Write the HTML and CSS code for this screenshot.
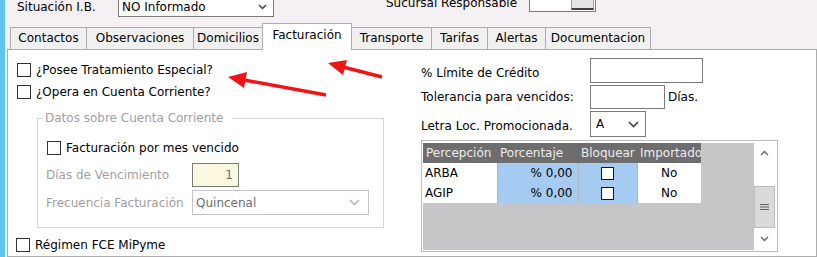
FILE: index.html
```html
<!DOCTYPE html>
<html lang="es">
  <head>
    <meta charset="UTF-8" />
    <title>Cliente - Facturación</title>
    <link rel="stylesheet" href="styles.css">
  </head>
  <body>
    <div class="side-strip"></div>
    <div class="form">
      <!-- fila superior (cortada) -->
      <div class="top-row">
        <div class="top-label ib-label">Situación I.B.</div>
        <div class="combo combo-ib">
          <span>NO Informado</span>
          <svg class="chev" width="9" height="6" viewBox="0 0 9 6"><polyline points="1,1 4.5,4.5 8,1" fill="none" stroke="#404040" stroke-width="1.5"/></svg>
        </div>
        <div class="top-label suc-label">Sucursal Responsable</div>
        <div class="suc-box"><div class="suc-btn"></div></div>
      </div>

      <div class="tabs">
        <div class="tab tab-contactos">Contactos</div>
        <div class="tab tab-obs">Observaciones</div>
        <div class="tab tab-dom">Domicilios</div>
        <div class="tab tab-fact active">Facturación</div>
        <div class="tab tab-transp">Transporte</div>
        <div class="tab tab-tarifas">Tarifas</div>
        <div class="tab tab-alertas">Alertas</div>
        <div class="tab tab-doc">Documentacion</div>
      </div>

      <div class="panel">
        <div class="col-left">
          <label class="check-row"><span class="check"></span>¿Posee Tratamiento Especial?</label>
          <label class="check-row"><span class="check"></span>¿Opera en Cuenta Corriente?</label>

          <fieldset class="group">
            <legend>Datos sobre Cuenta Corriente</legend>
            <label class="check-row"><span class="check"></span>Facturación por mes vencido</label>
            <div class="field-row row-dias">
              <span class="field-label">Días de Vencimiento</span>
              <div class="input input-dias">1</div>
            </div>
            <div class="field-row row-frec">
              <span class="field-label">Frecuencia Facturación</span>
              <div class="combo combo-frec">
                <span>Quincenal</span>
                <svg class="chev" width="11" height="7" viewBox="0 0 11 7"><polyline points="1,1 5.5,5.5 10,1" fill="none" stroke="#b0b0b0" stroke-width="1.4"/></svg>
              </div>
            </div>
          </fieldset>

          <label class="check-row regimen"><span class="check"></span>Régimen FCE MiPyme</label>
        </div>

        <div class="col-right">
          <div class="field-row r1">
            <span class="rlabel">% Límite de Crédito</span>
            <div class="input input-limite"></div>
          </div>
          <div class="field-row r2">
            <span class="rlabel">Tolerancia para vencidos:</span>
            <div class="input input-tol"></div>
            <span class="dias-suffix">Días.</span>
          </div>
          <div class="field-row r3">
            <span class="rlabel">Letra Loc. Promocionada.</span>
            <div class="combo combo-letra">
              <span>A</span>
              <svg class="chev" width="11" height="7" viewBox="0 0 11 7"><polyline points="1,1 5.5,5.5 10,1" fill="none" stroke="#404040" stroke-width="1.6"/></svg>
            </div>
          </div>

          <div class="grid">
            <div class="grid-body">
              <table class="perc">
                <thead>
                  <tr>
                    <th class="c-perc">Percepción</th>
                    <th class="c-pct">Porcentaje</th>
                    <th class="c-blq">Bloquear</th>
                    <th class="c-imp">Importado</th>
                  </tr>
                </thead>
                <tbody>
                  <tr>
                    <td>ARBA</td>
                    <td class="blue num">% 0,00</td>
                    <td class="blue center"><span class="cell-check"></span></td>
                    <td class="center">No</td>
                  </tr>
                  <tr>
                    <td>AGIP</td>
                    <td class="blue num">% 0,00</td>
                    <td class="blue center"><span class="cell-check"></span></td>
                    <td class="center">No</td>
                  </tr>
                </tbody>
              </table>
            </div>
            <div class="vscroll">
              <div class="sb-btn">
                <svg width="9" height="6" viewBox="0 0 9 6"><polyline points="1,5 4.5,1.5 8,5" fill="none" stroke="#606060" stroke-width="1.3"/></svg>
              </div>
              <div class="sb-track"></div>
              <div class="sb-thumb">
                <svg width="9" height="8" viewBox="0 0 9 8"><path d="M0 1.5h9M0 4h9M0 6.5h9" stroke="#606060" stroke-width="1.2"/></svg>
              </div>
              <div class="sb-btn">
                <svg width="9" height="6" viewBox="0 0 9 6"><polyline points="1,1 4.5,4.5 8,1" fill="none" stroke="#606060" stroke-width="1.3"/></svg>
              </div>
            </div>
          </div>
        </div>
      </div>
    </div>

    <!-- flechas rojas de anotación -->
    <svg class="arrows" width="817" height="257" viewBox="0 0 817 257">
      <line x1="326" y1="95" x2="244" y2="80" stroke="#f01414" stroke-width="3.5"/>
      <polygon points="228,77 247,72 244,88" fill="#f01414"/>
      <line x1="382" y1="77" x2="343" y2="67" stroke="#f01414" stroke-width="3.5"/>
      <polygon points="328,63 347,60 343,75" fill="#f01414"/>
    </svg>
  </body>
</html>
```

FILE: styles.css
```css
* {
  box-sizing: border-box;
}

body {
  margin: 0;
  height: 257px;
  overflow: hidden;
  display: flex;
  background-color: #f4f0f4;
  font-family: "DejaVu Sans", sans-serif;
  font-size: 12px;
  color: #000;
}

.side-strip {
  width: 5px;
  flex-shrink: 0;
  background-color: #5bc5ee;
}

.form {
  flex: 1;
  min-width: 0;
  margin-left: 2px;
  display: flex;
  flex-direction: column;
}

/* top row */
.top-row {
  height: 23px;
  display: flex;
  align-items: flex-start;
  padding-left: 10px;
}

.top-label {
  line-height: 14px;
  white-space: nowrap;
}

.ib-label {
  width: 101px;
}

.combo {
  display: flex;
  align-items: center;
  justify-content: space-between;
  background-color: #fff;
  border: 1px solid #7a7a7a;
  white-space: nowrap;
}

.combo-ib {
  width: 156px;
  height: 23px;
  margin-top: -6px;
  padding: 3px 6px 0 3px;
}

.suc-label {
  width: 143px;
  margin-left: 112px;
  margin-top: -4px;
}

.suc-box {
  width: 67px;
  height: 24px;
  margin-top: -12px;
  border: 1px solid #7a7a7a;
  background-color: #fff;
  display: flex;
  justify-content: flex-end;
  align-items: flex-end;
  padding: 0 1px 1px 0;
}

.suc-btn {
  width: 23px;
  height: 14px;
  background-color: #e3e3e3;
  border: 1px solid #a0a0a0;
  border-bottom: 2px solid #404040;
}

/* tabs */
.tabs {
  height: 26px;
  display: flex;
  align-items: flex-end;
  padding-left: 3px;
}

.tab {
  height: 22px;
  margin-right: -1px;
  border: 1px solid #acacac;
  border-bottom: none;
  background-color: #f0f0f0;
  text-align: center;
  line-height: 20px;
  white-space: nowrap;
}

.tab.active {
  height: 27px;
  margin-bottom: -1px;
  background-color: #fff;
  line-height: 22px;
  position: relative;
  z-index: 1;
}

.tab-contactos { width: 77px; }
.tab-obs { width: 108px; }
.tab-dom { width: 70px; }
.tab-fact { width: 90px; }
.tab-transp { width: 81px; }
.tab-tarifas { width: 57px; }
.tab-alertas { width: 59px; }
.tab-doc { width: 106px; }

/* panel */
.panel {
  flex: 1;
  background-color: #fff;
  border: 1px solid #adadad;
  display: grid;
  grid-template-columns: 413px 1fr;
  align-items: start;
}

.col-left {
  padding: 9px 0 0 9px;
}

.check-row {
  height: 22px;
  display: flex;
  align-items: center;
  gap: 5px;
  white-space: nowrap;
}

.check {
  width: 14px;
  height: 14px;
  border: 1px solid #333;
  background-color: #fff;
  flex-shrink: 0;
}

.group {
  width: 347px;
  margin: 8px 0 0 20px;
  padding: 11px 0 12px 9px;
  border: 1px solid #d7d7d7;
}

.group legend {
  margin-left: -4px;
  padding: 0 9px 0 2px;
  line-height: 15px;
  color: #a0a0a0;
}

.field-row {
  display: flex;
  align-items: center;
  white-space: nowrap;
}

.field-label {
  width: 146px;
  margin-left: -1px;
  color: #a0a0a0;
}

.row-dias {
  margin-top: 4px;
}

.row-frec {
  margin-top: 3px;
}

.input {
  background-color: #fff;
  border: 1px solid #7a7a7a;
}

.input-dias {
  width: 47px;
  height: 24px;
  background-color: #fbf8e0;
  color: #6d6d6d;
  text-align: right;
  padding-right: 5px;
  line-height: 22px;
}

.combo-frec {
  width: 177px;
  height: 25px;
  border-color: #c4c4c4;
  color: #6d6d6d;
  padding: 0 8px 0 3px;
}

.regimen {
  margin-top: 6px;
  margin-left: -1px;
}

/* right column */
.col-right {
  padding-top: 8px;
}

.rlabel {
  width: 169px;
}

.r1 .rlabel {
  padding-top: 5px;
}

.r3 .rlabel {
  padding-top: 3px;
}

.input-limite {
  width: 113px;
  height: 25px;
}

.r2 {
  margin-top: 2px;
}

.input-tol {
  width: 75px;
  height: 24px;
}

.dias-suffix {
  margin-left: 3px;
}

.r3 {
  margin-top: 2px;
}

.combo-letra {
  width: 56px;
  height: 26px;
  padding: 0 6px 0 5px;
}

/* percepciones grid */
.grid {
  width: 357px;
  height: 112px;
  margin-top: 3px;
  border: 1px solid #bdbdbd;
  padding: 2px 2px 1px 1px;
  background-color: #fff;
  display: flex;
}

.grid-body {
  flex: 1;
  background-color: #c6c5c8;
}

.perc {
  border-collapse: collapse;
  table-layout: fixed;
  width: 278px;
}

.perc th {
  height: 20px;
  padding: 0 0 0 3px;
  background-color: #6d6d6d;
  color: #ececec;
  font-weight: normal;
  text-align: left;
  white-space: nowrap;
  overflow: hidden;
}

.perc td {
  height: 20px;
  padding: 0 2px;
  background-color: #fff;
  border-left: 1px solid #b4b4b4;
}

.perc td:first-child {
  border-left: none;
}

.c-perc { width: 74px; }
.c-pct { width: 81px; }
.c-blq { width: 59px; }
.c-imp { width: 64px; }

.perc td.blue {
  background-color: #a6cbf3;
}

.perc td.num {
  text-align: right;
  padding-right: 5px;
}

.perc td.center {
  text-align: center;
}

.cell-check {
  display: inline-block;
  width: 13px;
  height: 13px;
  border: 1.5px solid #111;
  background-color: #fff;
  vertical-align: middle;
}

.vscroll {
  width: 21px;
  display: flex;
  flex-direction: column;
  background-color: #fff;
}

.sb-btn {
  height: 20px;
  display: flex;
  align-items: center;
  justify-content: center;
}

.sb-btn:last-child {
  height: 21px;
}

.sb-track {
  height: 23px;
}

.sb-thumb {
  height: 42px;
  background-color: #dadada;
  border: 1px solid #bcbcbc;
  display: flex;
  align-items: center;
  justify-content: center;
}

/* annotation arrows */
.arrows {
  position: absolute;
  top: 0;
  left: 0;
  pointer-events: none;
}
```
